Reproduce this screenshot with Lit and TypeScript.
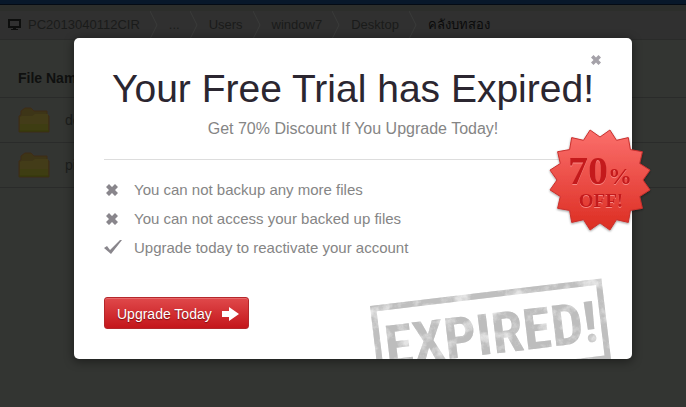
import { LitElement, html, css, svg } from "lit";
import { customElement } from "lit/decorators.js";

const BADGE_POINTS = Array.from({ length: 32 }, (_, i) => {
  const angle = (Math.PI / 16) * (i + 1);
  const r = i % 2 === 0 ? 51 : 43;
  return `${(52 + r * Math.sin(angle)).toFixed(1)},${(52 - r * Math.cos(angle)).toFixed(1)}`;
}).join(" ");

const FOLDERS = ["documents", "pictures"];
const CRUMBS = ["...", "Users", "window7", "Desktop"];

@customElement("file-browser")
export class FileBrowser extends LitElement {
  static styles = css`
    :host {
      display: block;
      font: 14px/20px "Liberation Sans", Arial, sans-serif;
      color: #1c1d1c;
    }
    .topbar {
      height: 4px;
      background: #08182a;
      border-bottom: 1px solid #040b14;
    }
    .strip {
      height: 6px;
      background: #2c2e2b;
    }
    .crumbs {
      display: flex;
      align-items: center;
      height: 28px;
      padding-left: 8px;
      background: #303030;
      border-bottom: 1px solid #2a2b2a;
      font-size: 13px;
      white-space: nowrap;
    }
    .crumbs a {
      color: #1a1b1a;
      text-decoration: none;
    }
    .crumbs .pc {
      display: flex;
      align-items: center;
      gap: 7px;
    }
    .crumbs .here {
      color: #0a0a0a;
    }
    .sep {
      width: 8px;
      height: 28px;
      margin: 0 11px 0 10px;
      fill: none;
      stroke: #3a3b3a;
      flex: none;
    }
    table {
      width: 100%;
      border-collapse: collapse;
    }
    th,
    td {
      padding: 0 18px;
      height: 44px;
      text-align: left;
      border-bottom: 1px solid #2a2b2a;
    }
    th {
      height: 38px;
      padding-top: 19px;
      color: #0f100f;
    }
    .entry {
      display: flex;
      align-items: center;
      gap: 15px;
    }
  `;

  render() {
    const sep = html`<svg class="sep" viewBox="0 0 8 28"><path d="M0 0L7 14L0 28" /></svg>`;
    return html`
      <div class="topbar"></div>
      <div class="strip"></div>
      <nav class="crumbs">
        <a class="pc" href="#">
          <svg width="13" height="12" viewBox="0 0 13 12">
            <path fill="#0d0e0d" fill-rule="evenodd" d="M0 0H13V9H8V10H10V11H3V10H5V9H0ZM2 2V7H11V2Z" />
          </svg>
          PC2013040112CIR
        </a>
        ${CRUMBS.map((c) => html`${sep}<a href="#">${c}</a>`)}
        ${sep}<a class="here" href="#">คลังบทสอง</a>
      </nav>
      <table>
        <thead>
          <tr><th>File Name</th></tr>
        </thead>
        <tbody>
          ${FOLDERS.map(
            (name) => html`<tr>
              <td>
                <div class="entry">
                  <svg width="32" height="26" viewBox="0 0 32 26">
                    <path d="M1 25V9L3 8V4L7 1H13L16 4H29V8L31 9V25Z" fill="#3d3517" stroke="#3f2c17" />
                    <path d="M2 24V10L4 9H14L17 7H30V24Z" fill="#433c18" />
                    <path d="M2 17H30V24H2Z" fill="#3e3d12" />
                    <path d="M1 24H31" stroke="#343a08" />
                  </svg>
                  ${name}
                </div>
              </td>
            </tr>`,
          )}
        </tbody>
      </table>
    `;
  }
}

@customElement("trial-dialog")
export class TrialDialog extends LitElement {
  static styles = css`
    :host {
      display: block;
      position: relative;
      box-sizing: border-box;
      padding: 0 30px;
      background: #fff;
      border-radius: 5px;
      box-shadow: 0 2px 10px 1px rgba(0, 0, 0, 0.4);
      font: 14px/20px "Liberation Sans", Arial, sans-serif;
      color: #858585;
    }
    button {
      font: inherit;
      border: 0;
      padding: 0;
      cursor: pointer;
    }
    .top {
      display: flex;
      justify-content: flex-end;
      padding-top: 17px;
    }
    .close {
      display: block;
      width: 12px;
      height: 10px;
      background: none;
    }
    .close svg {
      display: block;
    }
    h1 {
      margin: 0;
      font-size: 39px;
      line-height: 48px;
      font-weight: 400;
      text-align: center;
      white-space: nowrap;
      color: #2b2630;
    }
    .sub {
      margin: 0;
      padding: 6px 0 20px;
      font-size: 16px;
      text-align: center;
      border-bottom: 1px solid #ddd;
    }
    ul {
      margin: 0;
      padding: 20px 0 0;
      list-style: none;
      font-size: 15px;
    }
    li {
      display: flex;
      align-items: center;
      height: 20px;
      margin-bottom: 9px;
    }
    .mark {
      width: 18px;
      height: 16px;
      margin-right: 12px;
      fill: #89868c;
    }
    .foot {
      display: flex;
      justify-content: space-between;
      align-items: flex-start;
    }
    .upgrade {
      display: flex;
      align-items: center;
      gap: 10px;
      height: 32px;
      margin-top: 30px;
      padding: 2px 9px 0 12px;
      border: 1px solid #b5272b;
      border-radius: 3px;
      background: linear-gradient(#e0494b, #c4161b);
      box-shadow: inset 0 1px 0 #e8696b;
      color: #fff;
      text-shadow: 0 1px 1px #7a1013;
    }
    .stamp {
      display: block;
      margin: 8px -10px 0 0;
    }
    .badge {
      position: absolute;
      top: 90px;
      right: -20px;
    }
    .engraved {
      fill: #c41a1c;
      filter: drop-shadow(0 1px 0 #f78a85);
    }
  `;

  render() {
    const cross = svg`<path d="M3 5L6 2L9 5L12 2L15 5L12 8L15 11L12 14L9 11L6 14L3 11L6 8Z" />`;
    return html`
      <div class="top">
        <button class="close" aria-label="Close">
          <svg width="12" height="10" viewBox="3 2 12 12" fill="#a5a2a9">${cross}</svg>
        </button>
      </div>
      <h1>Your Free Trial has Expired!</h1>
      <p class="sub">Get 70% Discount If You Upgrade Today!</p>
      <ul>
        <li><svg class="mark" viewBox="1 0 18 16">${cross}</svg>You can not backup any more files</li>
        <li><svg class="mark" viewBox="1 0 18 16">${cross}</svg>You can not access your backed up files</li>
        <li>
          <svg class="mark" viewBox="0 0 18 16"><path d="M0 8L3 6L6 10L16 0L18 0L7 14Z" /></svg>Upgrade today to
          reactivate your account
        </li>
      </ul>
      <div class="foot">
        <button class="upgrade">
          Upgrade Today
          <svg width="17" height="14" viewBox="0 0 17 14"><path fill="#fff" d="M0 4H7V0L17 7L7 14V10H0Z" /></svg>
        </button>
        <svg class="stamp" width="242" height="84" viewBox="0 0 242 84">
          <defs>
            <filter id="worn" filterUnits="userSpaceOnUse" x="0" y="0" width="242" height="84">
              <feTurbulence type="fractalNoise" baseFrequency="0.07" numOctaves="6" seed="11" />
              <feColorMatrix values="0 0 0 0 0  0 0 0 0 0  0 0 0 0 0  3 0 0 0 -0.6" result="n" />
              <feComposite in="SourceGraphic" in2="n" operator="in" result="dark" />
              <feComponentTransfer in="SourceGraphic" result="pale">
                <feFuncA type="linear" slope="0.4" />
              </feComponentTransfer>
              <feMerge><feMergeNode in="pale" /><feMergeNode in="dark" /></feMerge>
            </filter>
          </defs>
          <g filter="url(#worn)">
            <g transform="translate(0 31) rotate(-6.8)">
              <rect x="3" y="3" width="227" height="77" fill="none" stroke="#bfbfbf" stroke-width="6" />
              <text
                x="117"
                y="62"
                text-anchor="middle"
                font-family="Roboto Condensed, Liberation Sans Narrow, Liberation Sans, sans-serif"
                font-weight="700"
                font-size="57"
                fill="#bdbdbd"
              >EXPIRED!</text>
            </g>
          </g>
        </svg>
      </div>
      <svg class="badge" width="104" height="106" viewBox="0 0 104 106" role="img" aria-label="70% off">
        <defs>
          <linearGradient id="red" x1="0" y1="0" x2="0" y2="1">
            <stop offset="0" stop-color="#fb6f6c" />
            <stop offset="1" stop-color="#dc2d22" />
          </linearGradient>
          <filter id="soft" x="-0.1" y="-0.1" width="1.2" height="1.2">
            <feDropShadow dx="0" dy="1" stdDeviation="1" flood-opacity="0.4" />
          </filter>
        </defs>
        <polygon points=${BADGE_POINTS} fill="url(#red)" stroke="#c9302d" filter="url(#soft)" />
        <g
          class="engraved"
          font-family="Liberation Serif, Times New Roman, serif"
          font-weight="700"
          text-anchor="middle"
        >
          <text x="52" y="56"><tspan font-size="40">70</tspan><tspan font-size="24">%</tspan></text>
          <text x="53" y="79" font-size="19">OFF!</text>
        </g>
      </svg>
    `;
  }
}

@customElement("app-root")
export class AppRoot extends LitElement {
  static styles = css`
    :host {
      display: grid;
      min-height: 100vh;
      overflow: hidden;
      background: #333532;
    }
    file-browser,
    .overlay {
      grid-area: 1 / 1;
      min-width: 0;
    }
    .overlay {
      position: relative;
      padding: 38px 54px 48px 74px;
    }
  `;

  render() {
    return html`
      <file-browser></file-browser>
      <div class="overlay"><trial-dialog role="dialog" aria-label="Trial expired"></trial-dialog></div>
    `;
  }
}
